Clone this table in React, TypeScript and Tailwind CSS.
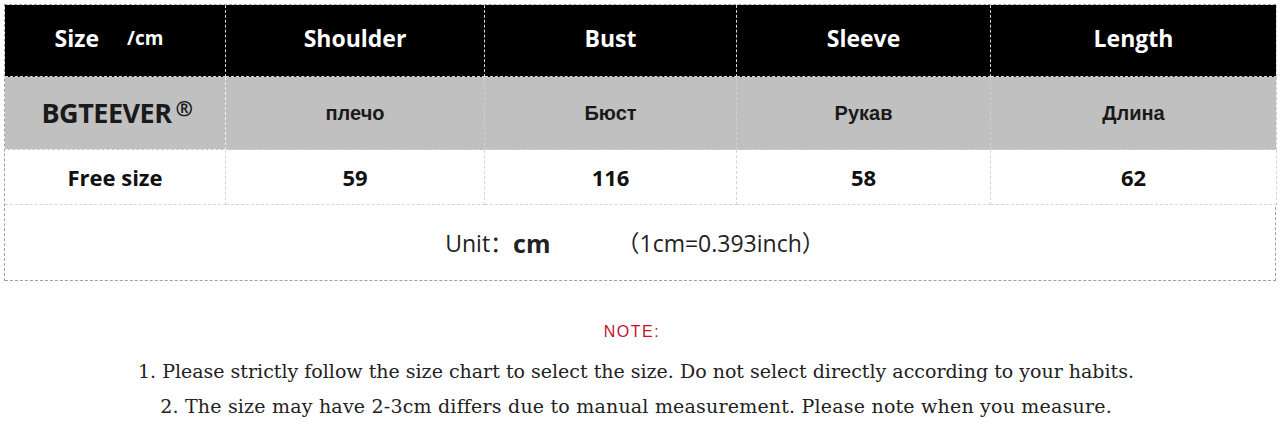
const cols = "grid grid-cols-[221px_259px_252px_254px_286px]";
const cell = "flex items-center justify-center border-r border-b border-dashed";

const heads = ["Shoulder", "Bust", "Sleeve", "Length"];
const ru = ["плечо", "Бюст", "Рукав", "Длина"];
const vals = ["59", "116", "58", "62"];

export default function App() {
  return (
    <div className="w-[1280px] h-[422px] bg-white pt-1 px-1 font-['Open_Sans',sans-serif]">
      <div className="w-[1272px] border-l border-t border-dashed border-gray-400">
        {/* Header */}
        <div className={`${cols} h-[72px] bg-black text-white text-[23px] font-bold`}>
          <div className={`${cell} border-gray-300 pb-1`}>
            <span className="ml-[-12px]">Size</span>
            <span className="ml-7 text-[19px]">/cm</span>
          </div>
          {heads.map((h) => (
            <div key={h} className={`${cell} border-gray-300 pb-1`}>{h}</div>
          ))}
        </div>

        {/* Russian names */}
        <div className={`${cols} h-[73px] bg-[#c0c0c0] text-[#1a1a1a] font-bold`}>
          <div className={`${cell} border-gray-100 text-[27px] tracking-[-0.5px] pl-1`}>
            BGTEEVER<span className="relative -top-1 ml-1 text-[21px]">®</span>
          </div>
          {ru.map((r) => (
            <div key={r} className={`${cell} border-[#d0d0d0] text-[20px] font-['Liberation_Sans',sans-serif]`}>{r}</div>
          ))}
        </div>

        {/* Values */}
        <div className={`${cols} h-[57px] text-[22px] font-bold text-[#111] pb-0.5`}>
          <div className={`${cell} border-gray-300`}>Free size</div>
          {vals.map((v) => (
            <div key={v} className={`${cell} border-gray-300`}>{v}</div>
          ))}
        </div>

        {/* Unit */}
        <div className="h-[74px] flex items-center justify-center border-r border-b border-dashed border-gray-400 text-[23px] text-[#222] font-['Open_Sans','Noto_Sans_CJK_SC',sans-serif]">
          <span className="ml-[-10px]">Unit：</span>
          <span className="text-[25px] font-bold">cm</span>
          <span className="ml-[66px]">（1cm=0.393inch）</span>
        </div>
      </div>

      {/* Notes */}
      <div className="mt-[43px] pr-[8px] flex flex-col items-center text-[#222] font-['DejaVu_Serif',serif]">
        <p className="mr-2 text-[16px] text-[#c8102e] font-['Liberation_Sans',sans-serif] tracking-[1.5px] leading-none">NOTE:</p>
        <p className="mt-[14px] text-[19px] leading-[35px]">
          1. Please strictly follow the size chart to select the size. Do not select directly according to your habits.
        </p>
        <p className="text-[19px] tracking-[0.2px] leading-[35px]">
          2. The size may have 2-3cm differs due to manual measurement. Please note when you measure.
        </p>
      </div>
    </div>
  );
}
